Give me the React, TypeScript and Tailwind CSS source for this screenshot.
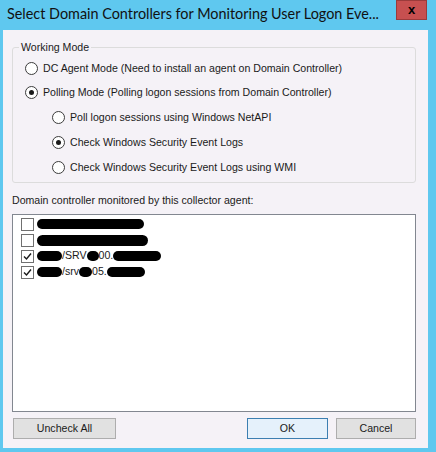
import React from 'react';

const ui = { fontFamily: '"Liberation Sans", Arial, sans-serif' };

function Radio({ checked, label }: { checked?: boolean; label: string }) {
  return (
    <div className="flex items-center gap-[5px]">
      <span className="flex h-[13px] w-[13px] items-center justify-center rounded-full border border-[#3c3c3c] bg-white">
        {checked && <span className="h-[5px] w-[5px] rounded-full bg-[#1a1a1a]" />}
      </span>
      <span>{label}</span>
    </div>
  );
}

function Check({ checked }: { checked?: boolean }) {
  return (
    <span className="flex h-[13px] w-[13px] shrink-0 items-center justify-center border border-[#707070] bg-white">
      {checked && (
        <svg width="9" height="9" viewBox="0 0 9 9">
          <path d="M1 4.5 L3.5 7 L8 1.5" fill="none" stroke="#1a1a1a" strokeWidth="1.4" />
        </svg>
      )}
    </span>
  );
}

// black marker strokes hiding server names
function Blob({ w, h = 10 }: { w: number; h?: number }) {
  return <span className="inline-block rounded-full bg-black" style={{ width: w, height: h }} />;
}

export default function App() {
  return (
    <div className="flex h-[452px] w-[436px] flex-col bg-[#5fc8ef] text-[10.6px] text-[#1a1a1a]" style={ui}>
      {/* Title bar */}
      <div className="flex h-[30px] items-start">
        <div
          className="mt-[4px] ml-[7px] flex-1 overflow-hidden text-[14.4px] leading-[20px] whitespace-nowrap text-[#111]"
          style={{ fontFamily: 'Lato, "Noto Sans", sans-serif' }}
        >
          Select Domain Controllers for Monitoring User Logon Eve...
        </div>
        <div className="mr-[9px] flex h-[20px] w-[31px] shrink-0 items-center justify-center border border-[#9b3b3b] bg-[#c75050] text-[13px] font-bold text-black">
          x
        </div>
      </div>

      {/* Client area */}
      <div className="ml-[3px] flex h-[418px] w-[425px] flex-col bg-[#f5f2f7] pr-[12px] pl-[9px]">
        {/* Working Mode group */}
        <div className="relative mt-[17px] h-[136px] rounded-[3px] border border-[#dcdcdc] pt-[9px]">
          <span className="absolute -top-[8px] left-[6px] bg-[#f5f2f7] px-[2px] leading-[14px]">Working Mode</span>
          <div className="flex h-[24px] items-center pl-[12px]">
            <Radio label="DC Agent Mode (Need to install an agent on Domain Controller)" />
          </div>
          <div className="flex h-[24px] items-center pl-[12px]">
            <Radio checked label="Polling Mode (Polling logon sessions from Domain Controller)" />
          </div>
          <div className="flex h-[25px] items-center pl-[39px]">
            <Radio label="Poll logon sessions using Windows NetAPI" />
          </div>
          <div className="flex h-[25px] items-center pl-[39px]">
            <Radio checked label="Check Windows Security Event Logs" />
          </div>
          <div className="flex h-[25px] items-center pl-[39px]">
            <Radio label="Check Windows Security Event Logs using WMI" />
          </div>
        </div>

        <div className="mt-[10px] leading-[14px]">Domain controller monitored by this collector agent:</div>

        {/* Domain controller list */}
        <div className="mt-[7px] h-[198px] border border-[#828790] bg-white pt-[1px] pl-[8px]">
          <div className="flex h-[16px] items-center gap-[3px]">
            <Check />
            <Blob w={107} />
          </div>
          <div className="flex h-[16px] items-center gap-[3px]">
            <Check />
            <Blob w={111} h={11} />
          </div>
          <div className="flex h-[16px] items-center gap-[3px]">
            <Check checked />
            <span className="flex items-center">
              <Blob w={25} />
              <span>/SRV</span>
              <Blob w={12} />
              <span>00.</span>
              <Blob w={48} />
            </span>
          </div>
          <div className="flex h-[16px] items-center gap-[3px]">
            <Check checked />
            <span className="flex items-center">
              <Blob w={25} />
              <span>/srv</span>
              <Blob w={13} />
              <span>05.</span>
              <Blob w={38} />
            </span>
          </div>
        </div>

        {/* Buttons */}
        <div className="mt-[6px] flex h-[21px] items-stretch">
          <button className="ml-[1px] w-[103px] border border-[#adadad] bg-[#e1e1e1]">Uncheck All</button>
          <div className="flex-1" />
          <button className="w-[81px] border border-[#3c7fb1] bg-[#e5f1fb]">OK</button>
          <button className="ml-[8px] w-[80px] border border-[#adadad] bg-[#e1e1e1]">Cancel</button>
        </div>
      </div>
    </div>
  );
}
